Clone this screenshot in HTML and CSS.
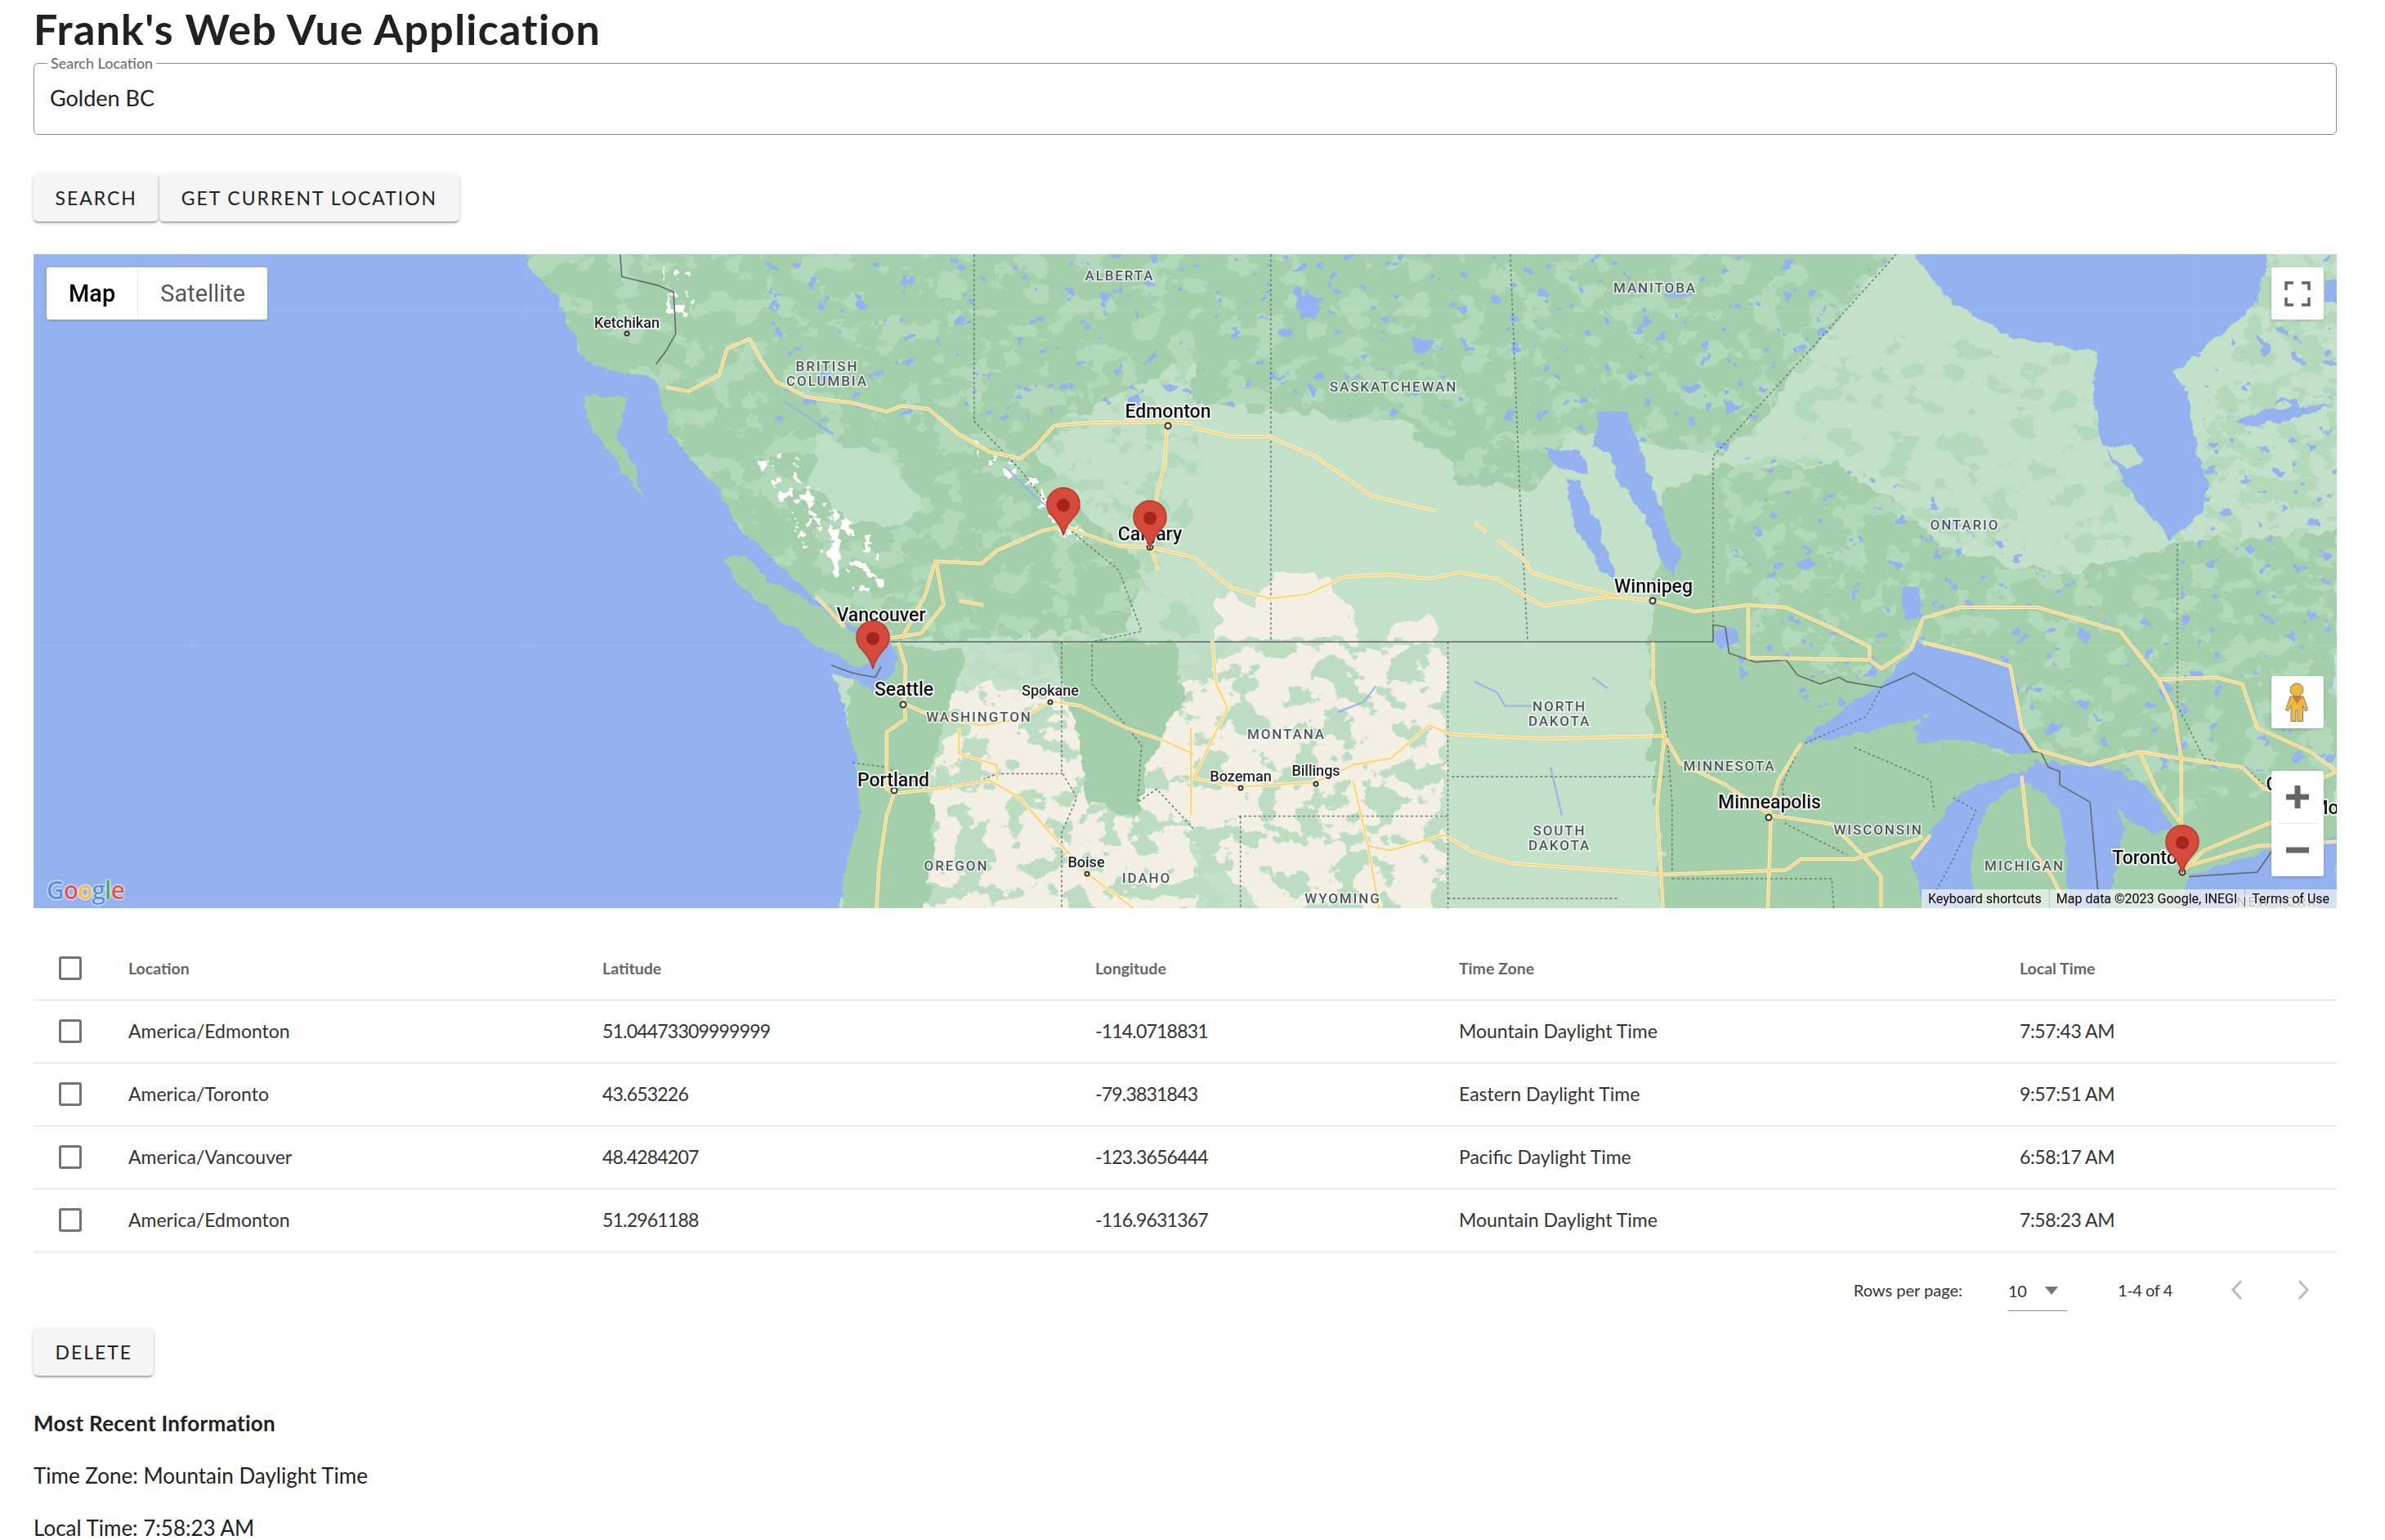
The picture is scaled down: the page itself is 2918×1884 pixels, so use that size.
FILE: index.html
```html
<!DOCTYPE html>
<html>
	<head>
		<meta charset="utf-8">
		<title>Frank's Web Vue Application</title>
		<link rel="stylesheet" href="styles.css">
	</head>
	<body>
		<h1 class="page-title">Frank's Web Vue Application</h1>

		<fieldset class="search-field">
			<legend class="search-label">Search Location</legend>
			<div class="search-value">Golden BC</div>
		</fieldset>

		<div class="button-row">
			<button class="btn">Search</button>
			<button class="btn">Get Current Location</button>
		</div>

		<div class="map">
			<svg class="map-canvas" viewBox="41 310 2818 800" width="2818" height="800" xmlns="http://www.w3.org/2000/svg">
				<defs>
					<filter id="rough" filterUnits="userSpaceOnUse" x="0" y="280" width="2918" height="860">
						<feTurbulence type="fractalNoise" baseFrequency=".04" numOctaves="3" seed="4" result="n"/>
						<feDisplacementMap in="SourceGraphic" in2="n" scale="26" xChannelSelector="R" yChannelSelector="G"/>
					</filter>
					<filter id="coast" filterUnits="userSpaceOnUse" x="0" y="280" width="2918" height="860">
						<feTurbulence type="fractalNoise" baseFrequency=".06" numOctaves="3" seed="9" result="n"/>
						<feDisplacementMap in="SourceGraphic" in2="n" scale="12" xChannelSelector="R" yChannelSelector="G"/>
					</filter>
					<filter id="noise-light" filterUnits="userSpaceOnUse" x="41" y="310" width="2818" height="800" color-interpolation-filters="sRGB">
						<feTurbulence type="fractalNoise" baseFrequency=".028 .036" numOctaves="5" seed="12"/>
						<feColorMatrix values="0 0 0 0 .70  0 0 0 0 .85  0 0 0 0 .73  1 0 0 0 0"/>
						<feComponentTransfer><feFuncA type="linear" slope="30" intercept="-16.8"/></feComponentTransfer>
					</filter>
					<filter id="noise-forest" filterUnits="userSpaceOnUse" x="41" y="310" width="2818" height="800" color-interpolation-filters="sRGB">
						<feTurbulence type="fractalNoise" baseFrequency=".026 .034" numOctaves="5" seed="21"/>
						<feColorMatrix values="0 0 0 0 .70  0 0 0 0 .85  0 0 0 0 .73  1 0 0 0 0"/>
						<feComponentTransfer><feFuncA type="linear" slope="30" intercept="-17.4"/></feComponentTransfer>
					</filter>
					<filter id="noise-green" filterUnits="userSpaceOnUse" x="41" y="310" width="2818" height="800" color-interpolation-filters="sRGB">
						<feTurbulence type="fractalNoise" baseFrequency=".024 .03" numOctaves="5" seed="33"/>
						<feColorMatrix values="0 0 0 0 .74  0 0 0 0 .865  0 0 0 0 .76  1 0 0 0 0"/>
						<feComponentTransfer><feFuncA type="linear" slope="30" intercept="-15.9"/></feComponentTransfer>
					</filter>
					<filter id="noise-water" filterUnits="userSpaceOnUse" x="41" y="310" width="2818" height="800" color-interpolation-filters="sRGB">
						<feTurbulence type="fractalNoise" baseFrequency=".05 .06" numOctaves="3" seed="7"/>
						<feColorMatrix values="0 0 0 0 .58  0 0 0 0 .70  0 0 0 0 .94  1 0 0 0 0"/>
						<feComponentTransfer><feFuncA type="linear" slope="40" intercept="-27.6"/></feComponentTransfer>
					</filter>
					<filter id="noise-snow" filterUnits="userSpaceOnUse" x="41" y="310" width="2818" height="800" color-interpolation-filters="sRGB">
						<feTurbulence type="fractalNoise" baseFrequency=".07" numOctaves="3" seed="15"/>
						<feColorMatrix values="0 0 0 0 1  0 0 0 0 1  0 0 0 0 .99  1 0 0 0 0"/>
						<feComponentTransfer><feFuncA type="linear" slope="30" intercept="-17"/></feComponentTransfer>
					</filter>

					<mask id="mask-canada" maskUnits="userSpaceOnUse" x="41" y="310" width="2818" height="800">
						<g class="mask-white" filter="url(#rough)">
							<path transform="translate(0 300) scale(.9311 .5357)" d="M640 0H1568V900H1000L640 700Z"/>
							<path transform="translate(1460 300) scale(.9298 .5357)" d="M0 0H930L830 200 770 350 690 480 700 900 900 1000 1090 1200 1300 1300 1505 1200V680L1505 0H1400L1280 680 1000 620 850 500 690 480 500 420 450 560 360 540 280 400 0 360Z"/>
						</g>
					</mask>
					<mask id="mask-mottle" maskUnits="userSpaceOnUse" x="41" y="310" width="2818" height="800">
						<g class="mask-white" filter="url(#rough)">
							<path transform="translate(1460 300) scale(.9298 .5357)" d="M820 200 1190 240 1300 680 1505 620V0H1430L1280 640 1000 620 850 500 700 480Z"/>
						</g>
					</mask>
					<mask id="mask-plains" maskUnits="userSpaceOnUse" x="41" y="310" width="2818" height="800">
						<g class="mask-white" filter="url(#rough)">
							<path transform="translate(0 300) scale(.9311 .5357)" d="M1180 900H1568V1568H1100L1160 1200Z"/>
							<path transform="translate(1460 300) scale(.9298 .5357)" d="M0 900H335V1568H0Z"/>
						</g>
					</mask>
					<mask id="mask-lakes" maskUnits="userSpaceOnUse" x="41" y="310" width="2818" height="800">
						<g class="mask-white">
							<path transform="translate(0 300) scale(.9311 .5357)" d="M1000 0H1568V400H1000Z"/>
							<path transform="translate(1460 300) scale(.9298 .5357)" d="M0 0H930L700 480 720 1000 1090 1200 1505 1200V0H1300L1300 900 900 500 700 480 500 420 280 400 0 360Z"/>
						</g>
					</mask>
					<mask id="mask-snow" maskUnits="userSpaceOnUse" x="41" y="310" width="2818" height="800">
						<g class="mask-white" filter="url(#rough)">
							<path transform="translate(0 300) scale(.9311 .5357)" d="M1000 480 1040 480 1090 580 1150 680 1160 790 1120 780 1060 700ZM870 40 910 60 910 170 875 150ZM1250 420 1340 500 1430 660 1400 690 1340 540Z"/>
						</g>
					</mask>

					<g id="roads-west" class="road-paths">
						<path d="M875 322 905 332 945 295 955 235 985 212 1000 260 1020 310 1060 345 1120 358 1165 378 1185 365 1220 372 1260 430 1300 470 1340 485 1360 460 1385 410 1435 403 1534 402 1568 405"/>
						<path d="M1534 402 1530 500 1520 570 1512 688 1522 740"/>
						<path d="M1170 895 1210 885 1240 820 1230 720 1290 725 1310 695 1370 650 1400 640 1430 660 1470 685 1511 688 1568 710"/>
						<path d="M1230 715 1215 800 1185 895"/>
						<path d="M1260 810 1292 820"/>
						<path d="M1072 800 1110 870"/>
						<path d="M1180 905 1190 960 1188 1045 1190 1080 1165 1110 1165 1240 1175 1250 1165 1300 1155 1420 1150 1568"/>
						<path d="M1188 1045 1220 1070 1290 1095 1340 1080 1380 1040 1420 1050 1480 1100 1530 1130 1568 1160"/>
						<path d="M1175 1250 1230 1240 1300 1220 1340 1260 1390 1360 1430 1435 1480 1500 1530 1568"/>
						<path d="M1260 1100 1260 1160 1310 1185 1310 1220"/>
						<path d="M1565 1100V1300"/>
					</g>
					<g id="roads-east" class="road-paths">
						<path d="M0 415 50 435 100 435 160 480 235 570 320 605"/>
						<path d="M0 710 50 780 100 805 150 795 200 755 260 750 310 760 350 745 400 760 460 822 550 800 605 810 660 835 730 820 780 825 850 880 890 915 890 945 905 965 945 920 960 850 1010 825 1110 825 1220 880 1270 990 1290 1060 1300 1170"/>
						<path d="M730 825 730 940 890 945"/>
						<path d="M370 630 385 655M400 670 435 715 445 745 500 775 560 800"/>
						<path d="M960 905 1030 935 1075 960 1090 1100 1110 1150 1180 1185 1245 1155 1300 1170 1380 1190 1410 1240 1440 1250 1505 1200"/>
						<path d="M1270 990 1345 985 1380 1000 1400 1100 1470 1155 1505 1200"/>
						<path d="M1245 1155 1270 1250 1300 1320 1300 1170"/>
						<path d="M1300 1430 1330 1380 1420 1315M1300 1420 1400 1370 1505 1360"/>
						<path d="M0 1215 60 1235 160 1225 210 1185 260 1170 310 1095 340 1115 460 1125 620 1118 640 1180 700 1230 760 1300 840 1320 880 1390 905 1440 905 1510"/>
						<path d="M605 905 605 1000 620 1118 610 1280 620 1568"/>
						<path d="M230 1370 260 1380 330 1345 370 1385 420 1410 620 1435 780 1425 800 1400 870 1400 960 1350"/>
						<path d="M760 1300 755 1568"/>
						<path d="M800 1135 770 1220 757 1300"/>
						<path d="M210 1220 230 1370 250 1568"/>
						<path d="M25 900 30 1000 45 1055 10 1180 0 1215"/>
						<path d="M1090 1210 1100 1370 1130 1440 1165 1568"/>
						<path d="M945 1400 970 1345"/>
					</g>
					<g id="pin">
						<path class="pin-body" d="M21 58C18 46 12 40 6 33A20 20 0 1 1 36 33C30 40 24 46 21 58Z"/>
						<circle class="pin-dot" cx="21" cy="21" r="8"/>
					</g>
				</defs>

				<rect class="land" x="41" y="310" width="2818" height="800"/>

				<g class="tan" filter="url(#rough)">
					<path transform="translate(0 300) scale(.9311 .5357)" d="M1230 1020 1300 1000 1400 1040 1568 1000V1568H1210L1180 1400 1230 1250Z"/>
					<path transform="translate(1460 300) scale(.9298 .5357)" d="M0 1000 60 920 330 910V1568H120L0 1350Z"/>
					<path d="M1490 725 1530 735 1560 700 1610 700 1650 740 1660 782H1490Z"/>
					<path d="M1700 770 1750 750 1760 782H1700Z"/>
				</g>

				<g mask="url(#mask-plains)"><rect x="41" y="310" width="2818" height="800" filter="url(#noise-green)"/></g>

				<g class="forest" filter="url(#rough)">
					<path transform="translate(0 300) scale(.9311 .5357)" d="M640 0H1568V250L1480 330 1400 400 1360 470 1420 600 1500 720 1480 880 1180 900 1000 900 640 700Z"/>
					<path d="M1040 790H1180L1170 850 1150 900 1135 960 1145 1000 1130 1120H1030ZM1290 785H1440L1450 850 1420 900 1400 950 1390 1000 1330 980 1320 900 1300 850Z"/>
					<path transform="translate(1460 300) scale(.9298 .5357)" d="M0 0H930L830 200 770 350 690 480 500 420 450 560 360 540 280 400 0 360ZM620 550 700 500 850 500 1000 700 1150 750 1300 680 1505 650V1568H930L620 1568 600 1100 600 900 610 700Z"/>
				</g>

				<g mask="url(#mask-canada)"><rect x="41" y="310" width="2818" height="800" filter="url(#noise-light)"/></g>
				<g mask="url(#mask-mottle)"><rect x="41" y="310" width="2818" height="800" filter="url(#noise-forest)"/></g>
				<g class="mid" filter="url(#rough)">
					<path d="M1000 530 1090 560 1130 620 1100 640 1040 640 990 590Z"/>
				</g>
				<g mask="url(#mask-lakes)"><rect x="41" y="310" width="2818" height="800" filter="url(#noise-water)"/></g>
				<g mask="url(#mask-snow)"><rect x="41" y="310" width="2818" height="800" filter="url(#noise-snow)"/></g>

				<!-- pacific -->
				<g filter="url(#coast)">
					<path class="water" transform="translate(0 300) scale(.9311 .5357)" d="M0 0H685L700 60 735 120 745 175 760 230 775 270 830 300 860 300 870 360 880 420 915 500 945 560 970 640 1000 690 1060 790 1110 860 1170 900 1180 950 1160 1000 1150 1020 1120 985 1095 975 1110 1060 1125 1170 1130 1300 1110 1430 1100 1568H0Z"/>
					<g class="forest" transform="translate(0 300) scale(.9311 .5357)">
						<path d="M950 715 975 705 1010 760 1080 830 1125 890 1150 950 1130 965 1070 910 1010 830 970 770Z"/>
						<path d="M768 340 825 345 810 430 825 470 847 580 800 470 770 390Z"/>
						<path d="M745 175 790 190 810 270 770 250ZM860 240 880 250 865 290 850 280Z"/>
					</g>
				</g>

				<!-- hudson bay and the lakes -->
				<g filter="url(#coast)">
					<g class="water" transform="translate(1460 300) scale(.9298 .5357)">
						<path d="M935 0 1000 130 1080 210 1190 240 1185 330 1195 450 1240 580 1285 670 1330 600 1335 540 1320 480 1310 340 1290 290 1400 130 1415 0Z"/>
						<path d="M1490 80 1505 85V135L1490 125Z"/>
						<path d="M800 1135 860 1050 905 1005 955 905 1030 935 1075 960 1090 1090 1105 1150 1090 1160 1010 1125 950 1130 970 1065 930 1090 860 1120Z"/>
						<path d="M1093 1200 1129 1176 1154 1185 1197 1188 1244 1225 1276 1275 1285 1331 1262 1343 1230 1312 1212 1281 1226 1331 1208 1468 1187 1568H1154L1147 1368 1144 1300 1119 1250 1093 1225Z"/>
						<path d="M1093 1200 1010 1245 985 1300 945 1400 970 1568H1032L1022 1400 1043 1281 1076 1244 1093 1225Z"/>
						<path d="M1309 1437 1369 1406 1418 1375 1505 1350V1568H1290Z"/>
						<path d="M535 375 570 380 590 470 615 600 640 700 630 760 610 700 595 620 560 540 545 470 525 460Z"/>
						<path d="M460 460 510 470 520 520 480 510ZM490 530 510 540 560 770 540 740 500 640Z"/>
						<path d="M930 775 955 780 960 860 935 850Z"/>
						<path d="M685 880 710 870 720 900 690 920Z"/>
						<path d="M1370 400 1420 370 1500 365 1440 400 1390 410Z"/>
						<path d="M285 210 320 215 305 250 290 240ZM135 105 170 120 160 170 140 160Z"/>
						<path d="M700 350 725 365 700 390Z"/>
					</g>
					<g class="light" transform="translate(1460 300) scale(.9298 .5357)">
						<path d="M1198 460 1235 450 1252 495 1225 505Z"/>
					</g>
				</g>

				<g class="grid-line">
					<path d="M235 310V1110M644 310V1110M41 379H2859M41 789H2859M1869 310V1110M2278 310V1110M2686 310V1110"/>
				</g>

				<g class="rivers">
					<path transform="translate(1460 300) scale(.9298 .5357)" d="M240 1005 225 1040 190 1065M370 995 400 1020 410 1050 445 1050M470 1190 485 1300M525 985 545 1010"/>
					<path d="M960 490 1020 530 1000 520M1230 570 1270 610 1290 625"/>
				</g>

				<g class="border-dashed">
					<g transform="translate(0 300) scale(.9311 .5357)">
						<path d="M1280 19V400L1340 510 1400 640 1470 740 1500 880 1435 904"/>
						<path d="M1395 904V1200L1415 1260 1395 1340V1568"/>
						<path d="M1435 910V1000L1500 1140 1495 1270 1520 1240 1568 1330"/>
						<path d="M1120 1180 1165 1190 1220 1240 1290 1220 1310 1205 1400 1205"/>
					</g>
					<g transform="translate(1460 300) scale(.9298 .5357)">
						<path d="M102 19V904M417 19 430 580 440 904M684 904V480L810 240 925 19"/>
						<path d="M335 904V1568M340 1212H625M60 1302H335M62 1302V1568M620 1040 630 1270V1445M630 1445H840L845 1568M335 1490H560"/>
						<path d="M800 1135 775 1230 780 1320 860 1390M870 1145 970 1220 975 1290M1295 680V1050L1330 1170 1390 1200 1415 1240"/>
						<path d="M805 1135 885 1075 905 1010M1000 1260 1030 1290 1000 1400 975 1480"/>
					</g>
				</g>
				<g class="border">
					<path transform="translate(0 300) scale(.9311 .5357)" d="M1170 904H1568M1092 957 1120 975 1150 985 1158 960M815 19 817 70 865 90 885 105 888 200 875 240 862 270"/>
					<path transform="translate(1460 300) scale(.9298 .5357)" d="M0 904H684V865L700 870 705 930 740 950 780 945 795 980 825 1000 850 985 860 995 905 1008 948 975 1090 1115 1105 1155 1115 1155 1125 1190 1140 1200 1140 1230 1180 1270 1195 1568M1310 1440 1400 1430 1420 1380"/>
				</g>

				<g>
					<use class="road-casing" href="#roads-west" transform="translate(0 300) scale(.9311 .5357)"/>
					<use class="road-casing" href="#roads-east" transform="translate(1460 300) scale(.9298 .5357)"/>
					<use class="road-line" href="#roads-west" transform="translate(0 300) scale(.9311 .5357)"/>
					<use class="road-line" href="#roads-east" transform="translate(1460 300) scale(.9298 .5357)"/>
				</g>

				<g class="region-labels">
					<text x="1370" y="342">ALBERTA</text>
					<text x="1012" y="453">BRITISH</text>
					<text x="1012" y="471">COLUMBIA</text>
					<text x="1705" y="478">SASKATCHEWAN</text>
					<text x="2025" y="357">MANITOBA</text>
					<text x="2404" y="647">ONTARIO</text>
					<text x="1198" y="882">WASHINGTON</text>
					<text x="1574" y="903">MONTANA</text>
					<text x="1908" y="869">NORTH</text>
					<text x="1908" y="887">DAKOTA</text>
					<text x="1170" y="1064">OREGON</text>
					<text x="1403" y="1079">IDAHO</text>
					<text x="1908" y="1021">SOUTH</text>
					<text x="1908" y="1039">DAKOTA</text>
					<text x="1643" y="1104">WYOMING</text>
					<text x="2116" y="942">MINNESOTA</text>
					<text x="2298" y="1020">WISCONSIN</text>
					<text x="2477" y="1064">MICHIGAN</text>
					<text x="2786" y="1108">NEW YORK</text>
				</g>
				<g class="city-dots">
					<circle cx="1429" cy="520" r="3.5"/>
					<circle cx="1407" cy="668" r="3.5"/>
					<circle cx="1105" cy="861" r="3.5"/>
					<circle cx="1094" cy="966" r="3.5"/>
					<circle cx="2022" cy="734" r="3.5"/>
					<circle cx="2164" cy="999" r="3.5"/>
					<circle cx="2670" cy="1066" r="3.5"/>
					<circle cx="767" cy="407" r="2.5"/>
					<circle cx="1285" cy="858" r="2.5"/>
					<circle cx="1518" cy="963" r="2.5"/>
					<circle cx="1610" cy="958" r="2.5"/>
					<circle cx="1330" cy="1068" r="2.5"/>
				</g>
				<g class="city-labels">
					<text x="1429" y="510">Edmonton</text>
					<text x="1407" y="660">Calgary</text>
					<text x="1078" y="759">Vancouver</text>
					<text x="1106" y="850">Seattle</text>
					<text x="1093" y="961">Portland</text>
					<text x="2023" y="724">Winnipeg</text>
					<text x="2165" y="988">Minneapolis</text>
					<text x="2624" y="1056">Toronto</text>
					<text x="2780" y="966">C</text>
					<text x="2845" y="995">Mo</text>
				</g>
				<g class="city-labels-small">
					<text x="767" y="400">Ketchikan</text>
					<text x="1285" y="850">Spokane</text>
					<text x="1518" y="955">Bozeman</text>
					<text x="1610" y="948">Billings</text>
					<text x="1329" y="1060">Boise</text>
				</g>

				<use href="#pin" x="1280" y="596"/>
				<use href="#pin" x="1386" y="612"/>
				<use href="#pin" x="1047" y="759"/>
				<use href="#pin" x="2649" y="1009"/>
			</svg>

			<div class="map-type">
				<div class="map-type-item map-type-active">Map</div>
				<div class="map-type-item">Satellite</div>
			</div>

			<div class="map-control map-fullscreen">
				<svg viewBox="0 0 64 64" width="64" height="64">
					<path class="ctrl-stroke" d="M18 28V19H27M37 19H46V28M46 37V46H37M27 46H18V37"/>
				</svg>
			</div>

			<div class="map-control map-pegman">
				<svg viewBox="0 0 64 64" width="64" height="64">
					<path class="peg-body" d="M23 25H39L44.500 41.500 41.500 43 38.500 36V55.500H32V42H30V55.500H24V36L20.500 43 17.500 41.500Z"/>
					<path class="peg-neck" d="M25 25H38L31.500 34Z"/>
					<circle class="peg-head" cx="31" cy="17" r="8"/>
				</svg>
			</div>

			<div class="map-control map-zoom">
				<div class="zoom-btn">
					<svg viewBox="0 0 64 64" width="64" height="64"><path class="ctrl-fill" d="M28.500 18H35.500V28.500H46V35.500H35.500V46H28.500V35.500H18V28.500H28.500Z"/></svg>
				</div>
				<div class="zoom-line"></div>
				<div class="zoom-btn">
					<svg viewBox="0 0 64 64" width="64" height="64"><path class="ctrl-fill" d="M18 28.500H46V35.500H18Z"/></svg>
				</div>
			</div>

			<div class="google-logo"><span class="g-blue">G</span><span class="g-red">o</span><span class="g-yellow">o</span><span class="g-blue">g</span><span class="g-green">l</span><span class="g-red">e</span></div>

			<div class="map-credits">
				<span class="credit">Keyboard shortcuts</span>
				<span class="credit">Map data ©2023 Google, INEGI</span>
				<span class="credit">Terms of Use</span>
			</div>
		</div>

		<table class="data-table">
			<colgroup>
				<col class="col-check">
				<col class="col-location">
				<col class="col-lat">
				<col class="col-lng">
				<col class="col-zone">
				<col>
			</colgroup>
			<thead>
				<tr>
					<th class="cell-check"><span class="checkbox"></span></th>
					<th>Location</th>
					<th>Latitude</th>
					<th>Longitude</th>
					<th>Time Zone</th>
					<th>Local Time</th>
				</tr>
			</thead>
			<tbody>
				<tr>
					<td class="cell-check"><span class="checkbox"></span></td>
					<td>America/Edmonton</td>
					<td class="cell-num">51.04473309999999</td>
					<td class="cell-num">-114.0718831</td>
					<td>Mountain Daylight Time</td>
					<td class="cell-time">7:57:43 AM</td>
				</tr>
				<tr>
					<td class="cell-check"><span class="checkbox"></span></td>
					<td>America/Toronto</td>
					<td class="cell-num">43.653226</td>
					<td class="cell-num">-79.3831843</td>
					<td>Eastern Daylight Time</td>
					<td class="cell-time">9:57:51 AM</td>
				</tr>
				<tr>
					<td class="cell-check"><span class="checkbox"></span></td>
					<td>America/Vancouver</td>
					<td class="cell-num">48.4284207</td>
					<td class="cell-num">-123.3656444</td>
					<td>Pacific Daylight Time</td>
					<td class="cell-time">6:58:17 AM</td>
				</tr>
				<tr>
					<td class="cell-check"><span class="checkbox"></span></td>
					<td>America/Edmonton</td>
					<td class="cell-num">51.2961188</td>
					<td class="cell-num">-116.9631367</td>
					<td>Mountain Daylight Time</td>
					<td class="cell-time">7:58:23 AM</td>
				</tr>
			</tbody>
		</table>

		<div class="pagination">
			<span class="rows-label">Rows per page:</span>
			<div class="rows-select">
				<span>10</span>
				<svg class="rows-arrow" viewBox="0 0 16 10" width="16" height="10"><path d="M0 0H16L8 10Z"/></svg>
			</div>
			<span class="rows-range">1-4 of 4</span>
			<div class="page-btn">
				<svg viewBox="0 0 16 26" width="16" height="26"><path d="M13 2 3 13 13 24"/></svg>
			</div>
			<div class="page-btn">
				<svg viewBox="0 0 16 26" width="16" height="26"><path d="M3 2 13 13 3 24"/></svg>
			</div>
		</div>

		<button class="btn">Delete</button>

		<h3 class="info-title">Most Recent Information</h3>
		<p class="info-line">Time Zone: Mountain Daylight Time</p>
		<p class="info-line">Local Time: 7:58:23 AM</p>
	</body>
</html>
```

FILE: styles.css
```css
html
{
	height: 1884px;
	overflow: hidden;
}
body
{
	margin: 0;
	padding: 0 59px 0 41px;
	height: 1884px;
	box-sizing: border-box;
	overflow: hidden;
	font-family: Lato, "Open Sans", sans-serif;
	color: #212121;
	background-color: white;
}
.page-title
{
	margin: 0 0 2px 0;
	font-size: 52px;
	line-height: 70px;
	font-weight: 700;
	letter-spacing: 1.25px;
}
.search-field
{
	margin: 0;
	padding: 0 0 0 19px;
	height: 93px;
	box-sizing: border-box;
	border: solid #8c8c8c 1.5px;
	border-radius: 6px;
	min-width: 0;
}
.search-label
{
	margin-left: -3px;
	padding: 0 4px;
	font-size: 18px;
	line-height: 10px;
	color: #666;
}
.search-value
{
	margin-top: 21px;
	font-size: 27px;
	line-height: 34px;
}
.button-row
{
	display: flex;
	gap: 1px;
	margin: 48px 0 40px 0;
}
.btn
{
	display: block;
	height: 58px;
	padding: 0 26.500px;
	border: none;
	border-radius: 6px;
	background-color: #f5f5f5;
	box-shadow: 0 3px 2px -2px rgba(0, 0, 0, .3), 0 2px 3px 0 rgba(0, 0, 0, .18), 0 1px 6px 0 rgba(0, 0, 0, .1);
	font-family: inherit;
	font-size: 23px;
	font-weight: 400;
	letter-spacing: 1.95px;
	text-transform: uppercase;
	color: #212121;
}

/* map */
.map
{
	position: relative;
	height: 800px;
	overflow: hidden;
	background-color: #94b2f0;
}
.map-canvas
{
	display: block;
}
.mask-white
{
	fill: white;
}
.land
{
	fill: #c3e0c9;
}
.tan
{
	fill: #f3efe5;
}
.forest
{
	fill: #a3d0aa;
}
.mid
{
	fill: #bddfc4;
}
.light
{
	fill: #c3e0c9;
}
.water
{
	fill: #94b2f0;
}
.grid-line path
{
	fill: none;
	stroke: rgba(255, 255, 255, .1);
	stroke-width: 1;
}
.rivers path
{
	fill: none;
	stroke: #94b2f0;
	stroke-width: 2;
	vector-effect: non-scaling-stroke;
}
.border-dashed path
{
	fill: none;
	stroke: #6d7470;
	stroke-width: 1.5;
	stroke-dasharray: 3 3;
	vector-effect: non-scaling-stroke;
}
.border path
{
	fill: none;
	stroke: #5f6468;
	stroke-width: 1.5;
	vector-effect: non-scaling-stroke;
}
.road-paths path
{
	fill: none;
	stroke-linejoin: round;
	vector-effect: non-scaling-stroke;
}
.road-casing
{
	stroke: #fff3d2;
	stroke-width: 4;
}
.road-line
{
	stroke: #fbd274;
	stroke-width: 2;
}
.region-labels text
{
	font-family: Roboto, sans-serif;
	font-size: 17px;
	font-weight: 500;
	letter-spacing: 1.9px;
	text-anchor: middle;
	fill: #50555a;
	stroke: rgba(255, 255, 255, .75);
	stroke-width: 3px;
	paint-order: stroke;
}
.city-labels text
{
	font-family: Roboto, sans-serif;
	font-size: 23px;
	font-weight: 500;
	text-anchor: middle;
	fill: #111;
	stroke: rgba(255, 255, 255, .9);
	stroke-width: 3.5px;
	paint-order: stroke;
}
.city-labels-small text
{
	font-family: Roboto, sans-serif;
	font-size: 18px;
	font-weight: 500;
	text-anchor: middle;
	fill: #222;
	stroke: rgba(255, 255, 255, .9);
	stroke-width: 3px;
	paint-order: stroke;
}
.city-dots circle
{
	fill: white;
	stroke: #333;
	stroke-width: 2;
}
.pin-body
{
	fill: #d64a3b;
	stroke: #b93a2d;
	stroke-width: 1.500;
}
.pin-dot
{
	fill: #a4261b;
}
.map-type
{
	position: absolute;
	left: 16px;
	top: 16px;
	display: flex;
	height: 64px;
	border-radius: 3px;
	background-color: white;
	box-shadow: 0 1px 4px -1px rgba(0, 0, 0, .3);
	font-family: Roboto, sans-serif;
	font-size: 29px;
	line-height: 64px;
	color: #565656;
}
.map-type-item
{
	padding: 0 27px 0 27px;
}
.map-type-active
{
	font-weight: 500;
	color: black;
	border-right: solid #ececec 1px;
}
.map-control
{
	position: absolute;
	right: 16px;
	width: 64px;
	border-radius: 3px;
	background-color: white;
	box-shadow: 0 1px 4px -1px rgba(0, 0, 0, .3);
}
.map-control svg
{
	display: block;
}
.map-fullscreen
{
	top: 16px;
	height: 64px;
}
.map-pegman
{
	top: 516px;
	height: 64px;
}
.map-zoom
{
	top: 632px;
	height: 129px;
}
.zoom-btn
{
	height: 64px;
}
.zoom-line
{
	height: 1px;
	margin: 0 8px;
	background-color: #e6e6e6;
}
.ctrl-stroke
{
	fill: none;
	stroke: #666;
	stroke-width: 3.500;
}
.ctrl-fill
{
	fill: #666;
}
.peg-body
{
	fill: #f1b83f;
	stroke: #7d7d7d;
	stroke-width: 1;
}
.peg-neck
{
	fill: #cf7b3c;
}
.peg-head
{
	fill: #f1b83f;
	stroke: #7d7d7d;
	stroke-width: 1;
}
.google-logo
{
	position: absolute;
	left: 16px;
	bottom: 2px;
	font-family: "Open Sans", sans-serif;
	font-size: 30px;
	line-height: 40px;
	font-weight: 600;
	letter-spacing: -1px;
	text-shadow: 0 0 2px white, 0 0 2px white, 0 0 3px white;
}
.g-blue
{
	color: #5a8df0;
}
.g-red
{
	color: #e0564a;
}
.g-yellow
{
	color: #f2bd3a;
}
.g-green
{
	color: #49ab5f;
}
.map-credits
{
	position: absolute;
	right: 0;
	bottom: 0;
	display: flex;
	height: 23px;
	font-family: Roboto, sans-serif;
	font-size: 16px;
	line-height: 23px;
	color: black;
}
.credit
{
	padding: 0 9px 0 8px;
	margin-left: 1px;
	background-color: rgba(245, 245, 245, .7);
}

/* table */
.data-table
{
	width: 100%;
	margin-top: 35px;
	border-collapse: collapse;
	table-layout: fixed;
}
.col-check
{
	width: 116px;
}
.col-location
{
	width: 580px;
}
.col-lat
{
	width: 603px;
}
.col-lng
{
	width: 445px;
}
.col-zone
{
	width: 686px;
}
.data-table th
{
	height: 77px;
	padding: 0;
	box-sizing: border-box;
	border-bottom: solid #e0e0e0 1.5px;
	text-align: left;
	font-size: 19.500px;
	font-weight: 700;
	color: #666;
}
.data-table td
{
	height: 77px;
	padding: 0 0 2px 0;
	box-sizing: border-box;
	border-bottom: solid #e0e0e0 1.5px;
	font-size: 23px;
	color: #333;
}
.data-table .cell-num
{
	letter-spacing: -.8px;
}
.data-table .cell-time
{
	letter-spacing: -.4px;
}
.data-table .cell-check
{
	padding-left: 31px;
	padding-bottom: 0;
}
.checkbox
{
	display: block;
	width: 28px;
	height: 29px;
	box-sizing: border-box;
	border: solid #757575 3px;
	border-radius: 3px;
}

/* pagination */
.pagination
{
	display: flex;
	align-items: center;
	justify-content: flex-end;
	height: 93px;
	font-size: 20px;
	color: #333;
}
.rows-label
{
	margin-right: 56px;
}
.rows-select
{
	display: flex;
	align-items: center;
	justify-content: space-between;
	width: 72px;
	height: 52px;
	padding: 2px 11px 0 0;
	box-sizing: border-box;
	border-bottom: solid #8c8c8c 1.5px;
	letter-spacing: -.4px;
}
.rows-arrow
{
	fill: #757575;
}
.rows-range
{
	margin: 0 55px 0 62px;
	letter-spacing: -.4px;
}
.page-btn
{
	display: flex;
	align-items: center;
	justify-content: center;
	width: 48px;
	height: 48px;
	margin-right: 17px;
}
.page-btn + .page-btn
{
	margin-left: 16px;
}
.page-btn path
{
	fill: none;
	stroke: #bdbdbd;
	stroke-width: 3;
}

/* recent info */
.info-title
{
	margin: 44px 0 0 0;
	font-size: 26px;
	line-height: 28px;
	font-weight: 700;
	letter-spacing: .3px;
}
.info-line
{
	margin: 36px 0 0 0;
	font-size: 26px;
	line-height: 28px;
}
```
